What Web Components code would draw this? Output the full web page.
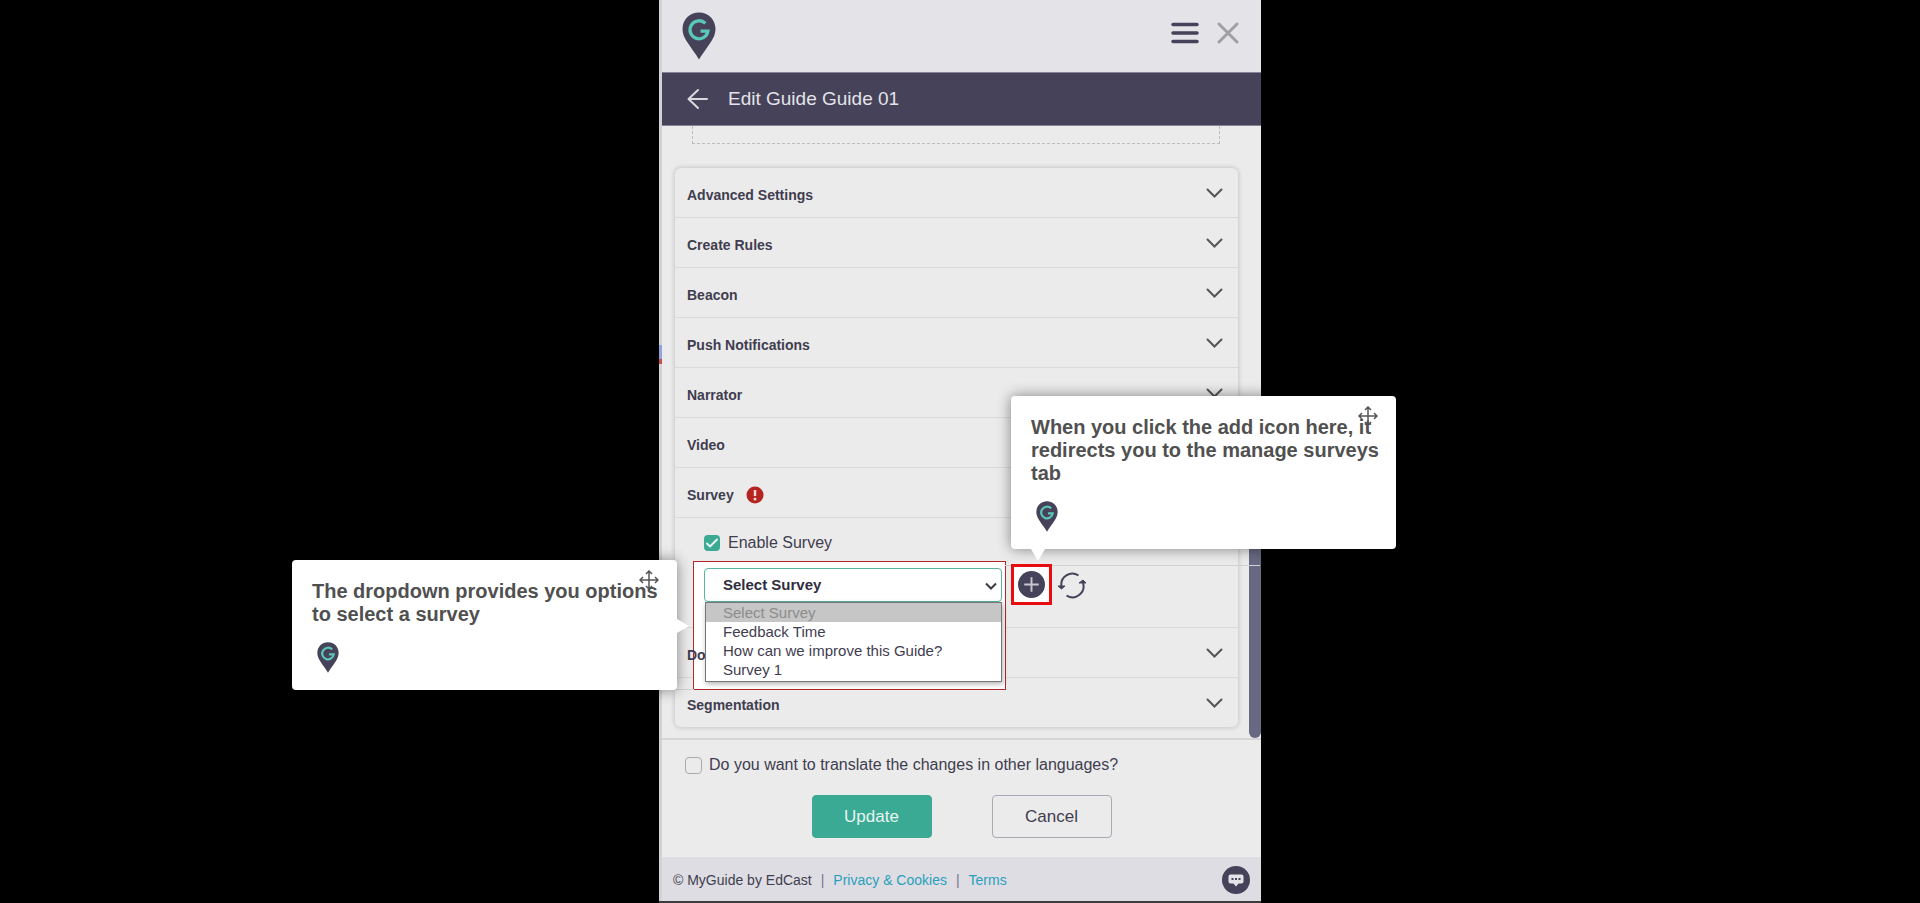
<!DOCTYPE html>
<html lang="en">
<head>
<meta charset="utf-8">
<title>Edit Guide</title>
<style>
    body {
        margin: 0;
        background: #000;
        font-family: "Liberation Sans", Arial, sans-serif;
        color: #3f3d4f;
    }
</style>
</head>
<body>
<guide-panel>
    <panel-header slot="header"></panel-header>
    <title-bar slot="header">Edit Guide Guide 01</title-bar>
    <settings-card>
        <accordion-row>Advanced Settings</accordion-row>
        <accordion-row>Create Rules</accordion-row>
        <accordion-row>Beacon</accordion-row>
        <accordion-row>Push Notifications</accordion-row>
        <accordion-row>Narrator</accordion-row>
        <accordion-row>Video</accordion-row>
        <accordion-row alert>Survey</accordion-row>
        <survey-settings>
            <guide-callout slot="select-tip" side="left">The dropdown provides you options to select a survey</guide-callout>
            <guide-callout slot="add-tip" side="top">When you click the add icon here, it redirects you to the manage surveys tab</guide-callout>
        </survey-settings>
        <accordion-row>Do</accordion-row>
        <accordion-row>Segmentation</accordion-row>
    </settings-card>
    <form-actions slot="footer"></form-actions>
    <panel-footer slot="footer"></panel-footer>
</guide-panel>

<script>
const reset = `
    :host, * {
        box-sizing: border-box;
    }

    button {
        padding: 0;
        border: 0;
        background: none;
        font: inherit;
        color: inherit;
        cursor: pointer;
    }

    svg {
        display: block;
    }
`;

class BaseElement extends HTMLElement {
    constructor() {
        super();
        this.shadowDOM = this.attachShadow({mode: "open"});
    }

    connectedCallback() {
        this.shadowDOM.innerHTML = `<style>${reset}</style>${this.template()}`;
    }
}

class GuidePanel extends BaseElement {
    template() {
        return `
        <style>
            :host {
                display: flex;
                flex-direction: column;
                width: 100%;
                max-width: 602px;
                min-height: 100vh;
                margin: 0 auto;
                padding-left: 3px;
                border-bottom: 2px solid #3c3c3c;
                background: linear-gradient(#d2d2d4 345px, #8fa5d8 345px, #8fa5d8 359px, #c05048 359px, #c05048 364px, #d2d2d4 364px);
            }
            .body {
                flex: 1;
                display: flex;
                background: #ebebeb;
                border-bottom: 2px solid #d6d6d6;
            }
            .content {
                flex: 1;
                padding: 0 11px 11px 13px;
            }
            .drop-area {
                height: 18px;
                margin: 0 18px 24px 17px;
                border: 1px dashed #bdbdbd;
                border-top: 0;
            }
            .scroll-thumb {
                align-self: flex-end;
                width: 12px;
                height: 300px;
                border-radius: 6px;
                background: #686882;
            }
        </style>
        <slot name="header"></slot>
        <div class="body">
            <div class="content">
                <div class="drop-area"></div>
                <slot></slot>
            </div>
            <div class="scroll-thumb"></div>
        </div>
        <slot name="footer"></slot>
        `;
    }
}

class GuidePin extends BaseElement {
    template() {
        return `
        <style>
            :host {
                display: block;
                width: 34px;
            }
        </style>
        <svg viewBox="0 0 34 48">
            <path d="M17 .5C7.500 .5.5 7.800.5 17c0 4.500 1.800 8.500 4 12C8.500 35.500 14 42 17 47.500 20 42 25.500 35.500 29.500 29c2.200-3.500 4-7.500 4-12C33.500 7.800 26.500.5 17 .5z" fill="#454259"/>
            <path d="M23.400 11.400A9 9 0 1 0 25.900 19.200H18.500" fill="none" stroke="#5ac8b8" stroke-width="3.300"/>
        </svg>
        `;
    }
}

class PanelHeader extends BaseElement {
    template() {
        return `
        <style>
            :host {
                display: flex;
                align-items: center;
                height: 72px;
                padding: 0 21px 0 20px;
                background: #e4e3e8;
            }
            nav {
                display: flex;
                gap: 16px;
                margin-left: auto;
                padding-bottom: 6px;
            }
        </style>
        <guide-pin></guide-pin>
        <nav>
            <button aria-label="Menu">
                <svg width="30" height="24" fill="none" stroke="#454259" stroke-width="3.500" stroke-linecap="round"><path d="M3 3.500h24M3 12h24M3 20.500h24"/></svg>
            </button>
            <button aria-label="Close">
                <svg width="24" height="24" fill="none" stroke="#a09fa4" stroke-width="3" stroke-linecap="round"><path d="M3 3l18 18M21 3L3 21"/></svg>
            </button>
        </nav>
        `;
    }
}

class TitleBar extends BaseElement {
    template() {
        return `
        <style>
            :host {
                display: flex;
                align-items: center;
                gap: 19px;
                height: 54px;
                padding-left: 25px;
                border-top: 1px solid #85839a;
                border-bottom: 1px solid #85839a;
                background: #454259;
                color: #e4e3e8;
            }
            h1 {
                margin: 0;
                font-size: 19px;
                line-height: 24px;
                font-weight: normal;
            }
        </style>
        <button aria-label="Back">
            <svg width="22" height="22" fill="none" stroke="#d9d8df" stroke-width="2" stroke-linecap="round" stroke-linejoin="round"><path d="M20 11H2M11 2l-9.500 9 9.500 9"/></svg>
        </button>
        <h1><slot></slot></h1>
        `;
    }
}

class SettingsCard extends BaseElement {
    template() {
        return `
        <style>
            :host {
                display: block;
                border-radius: 6px;
                box-shadow: 0 0 4px 1px #c8c8c8;
            }
        </style>
        <slot></slot>
        `;
    }
}

class AccordionRow extends BaseElement {
    template() {
        const alert = this.hasAttribute("alert")
            ? `<svg class="alert" width="18" height="18"><circle cx="9" cy="9" r="8.500" fill="#b5241f"/><path d="M9 4v6" stroke="#f3d9d8" stroke-width="2.500"/><circle cx="9" cy="13" r="1.500" fill="#f3d9d8"/></svg>`
            : "";
        return `
        <style>
            :host {
                display: block;
                border-bottom: 1px solid #dadada;
            }
            :host(:last-child) {
                border-bottom: 0;
            }
            button {
                display: flex;
                align-items: center;
                width: 100%;
                height: 49px;
                padding: 0 15px 0 12px;
                font-size: 14px;
                font-weight: bold;
            }
            span {
                position: relative;
                z-index: 2;
                padding-top: 4px;
            }
            .alert {
                margin: 4px 0 0 12px;
            }
            .chevron {
                margin-left: auto;
            }
        </style>
        <button>
            <span><slot></slot></span>
            ${alert}
            <svg class="chevron" width="17" height="10" fill="none" stroke="#555" stroke-width="2" stroke-linecap="round"><path d="M1.500 1.500l7 7 7-7"/></svg>
        </button>
        `;
    }
}

class SurveySettings extends BaseElement {
    template() {
        return `
        <style>
            :host {
                display: block;
                height: 110px;
                padding: 16px 29px;
                border-bottom: 1px solid #dadada;
            }
            .enable {
                display: flex;
                align-items: center;
                gap: 8px;
                height: 18px;
                margin-bottom: 15px;
                font-size: 16px;
            }
            .enable input {
                appearance: none;
                width: 16px;
                height: 16px;
                margin: 0;
                border-radius: 4px;
                background: #3aaa92;
            }
            .check {
                display: grid;
            }
            .check > * {
                grid-area: 1 / 1;
            }
            .controls {
                display: flex;
                align-items: center;
                gap: 15px;
            }
            .picker, .adder {
                position: relative;
            }
            .highlight {
                position: absolute;
                z-index: 1;
                inset: -7px -4px -88px -11px;
                border: 1px solid #b3262a;
                background: #fff;
            }
            .highlight::before, .highlight::after {
                content: "";
                position: absolute;
                height: 1px;
                background: #d0d0d2;
            }
            .highlight::before {
                top: 3px;
                left: 100%;
                width: 255px;
            }
            .highlight::after {
                top: 100%;
                right: 100%;
                width: 31px;
            }
            .select {
                position: relative;
                z-index: 3;
            }
            select {
                appearance: none;
                display: block;
                width: 298px;
                height: 34px;
                padding: 0 18px;
                border: 1px solid #57b5a2;
                border-radius: 4px;
                background: #fff;
                color: #302e40;
                font: bold 15px "Liberation Sans", Arial, sans-serif;
            }
            .arrow {
                position: absolute;
                top: 14px;
                right: 5px;
            }
            ul {
                position: absolute;
                top: 34px;
                left: 1px;
                right: 0;
                margin: 0;
                padding: 0 0 2px;
                border: 1px solid #777;
                background: #fff;
                box-shadow: 1px 2px 5px rgba(0, 0, 0, 0.3);
                list-style: none;
                font-size: 15px;
                line-height: 19px;
            }
            li {
                padding-left: 17px;
            }
            li[aria-selected] {
                background: #c6c6c6;
                color: #8c8c8c;
            }
            .add {
                display: block;
                position: relative;
                z-index: 2;
                margin: -3px -9px -3px -6px;
                padding: 4px;
                border: 3px solid #e60c10;
                background: #fff;
            }
            .tip {
                position: absolute;
                z-index: 5;
            }
            .select-tip {
                top: -8px;
                right: calc(100% + 27px);
            }
            .add-tip {
                bottom: calc(100% + 18px);
                left: -6px;
            }
        </style>
        <label class="enable">
            <div class="check">
                <input type="checkbox" checked>
                <svg width="16" height="16" fill="none" stroke="#e6f3ef" stroke-width="2" stroke-linecap="round" stroke-linejoin="round"><path d="M3 8.500l3 3 7-7"/></svg>
            </div>
            Enable Survey
        </label>
        <div class="controls">
            <div class="picker">
                <div class="highlight"></div>
                <div class="select">
                    <select aria-label="Survey">
                        <option>Select Survey</option>
                    </select>
                    <svg class="arrow" width="12" height="9" fill="none" stroke="#3a3a44" stroke-width="2"><path d="M1 1.500l5 5 5-5"/></svg>
                    <ul role="listbox">
                        <li role="option" aria-selected="true">Select Survey</li>
                        <li role="option">Feedback Time</li>
                        <li role="option">How can we improve this Guide?</li>
                        <li role="option">Survey 1</li>
                    </ul>
                </div>
                <div class="tip select-tip"><slot name="select-tip"></slot></div>
            </div>
            <div class="adder">
                <button class="add" aria-label="Add survey">
                    <svg width="27" height="27" viewBox="0 0 28 28"><circle cx="14" cy="14" r="14" fill="#454259"/><path d="M14 6.500v15M6.500 14h15" stroke="#c9c8d2" stroke-width="2"/></svg>
                </button>
                <div class="tip add-tip"><slot name="add-tip"></slot></div>
            </div>
            <button aria-label="Refresh surveys">
                <svg width="28" height="28" fill="none" stroke="#454259" stroke-width="2"><path d="M3.500 15.500A11 11 0 0 1 20.500 4.500M25 12a11 11 0 0 1-16.500 12.500"/><path d="M0 15h7l-3.500 3zM21 12h7l-3-3z" fill="#454259" stroke-width="1"/></svg>
            </button>
        </div>
        `;
    }
}

class GuideCallout extends BaseElement {
    template() {
        return `
        <style>
            :host {
                display: block;
                position: relative;
                width: 385px;
                padding: 20px 16px 17px 20px;
                border-radius: 4px;
                background: #fff;
                box-shadow: 0 0 14px rgba(0, 0, 0, 0.45);
                color: #505050;
            }
            p {
                margin: 0 0 16px;
                font-size: 20px;
                line-height: 23px;
                font-weight: bold;
            }
            guide-pin {
                width: 22px;
                margin-left: 5px;
            }
            .move {
                position: absolute;
                top: 10px;
                right: 18px;
            }
            .tail {
                position: absolute;
                border: 7px solid transparent;
            }
            :host([side="left"]) .tail {
                left: 100%;
                top: 59px;
                border-left: 12px solid #fff;
                border-right: 0;
            }
            :host([side="top"]) .tail {
                top: 100%;
                left: 20px;
                border-top: 12px solid #fff;
                border-bottom: 0;
            }
        </style>
        <p><slot></slot></p>
        <guide-pin></guide-pin>
        <svg class="move" width="20" height="20" fill="none" stroke="#555" stroke-width="1.500"><path d="M10 1v18M1 10h18M7 4l3-3 3 3M7 16l3 3 3-3M4 7l-3 3 3 3M16 7l3 3-3 3"/></svg>
        <div class="tail"></div>
        `;
    }
}

class FormActions extends BaseElement {
    template() {
        return `
        <style>
            :host {
                display: block;
                padding: 16px 23px 19px;
                background: #ebebeb;
            }
            label {
                display: flex;
                align-items: center;
                gap: 7px;
                height: 18px;
                margin-bottom: 21px;
                font-size: 16px;
            }
            input {
                appearance: none;
                width: 17px;
                height: 17px;
                margin: 0;
                border: 1px solid #aaa9b0;
                border-radius: 4px;
            }
            .buttons {
                display: flex;
                justify-content: center;
                gap: 60px;
            }
            .buttons button {
                width: 120px;
                height: 43px;
                border: 1px solid #a9a8b3;
                border-radius: 4px;
                font-size: 17px;
            }
            .buttons .update {
                border-color: #3aaa94;
                background: #3aaa94;
                color: #e8f5f2;
            }
        </style>
        <label><input type="checkbox"> Do you want to translate the changes in other languages?</label>
        <div class="buttons">
            <button class="update">Update</button>
            <button>Cancel</button>
        </div>
        `;
    }
}

class PanelFooter extends BaseElement {
    template() {
        return `
        <style>
            :host {
                display: flex;
                align-items: center;
                gap: 9px;
                height: 44px;
                padding: 2px 11px 0;
                background: #dedde3;
                font-size: 14px;
            }
            a {
                color: #2a9fbc;
                text-decoration: none;
            }
            i {
                font-style: normal;
                color: #77758a;
            }
            button {
                margin-left: auto;
            }
        </style>
        <span>© MyGuide by EdCast</span><i>|</i>
        <a href="#privacy">Privacy &amp; Cookies</a><i>|</i>
        <a href="#terms">Terms</a>
        <button aria-label="Chat">
            <svg width="28" height="28"><circle cx="14" cy="14" r="14" fill="#454259"/><path d="M8.500 8.500h11a2 2 0 0 1 2 2v5a2 2 0 0 1-2 2h-3l-2.500 3-2.500-3h-3a2 2 0 0 1-2-2v-5a2 2 0 0 1 2-2z" fill="#e4e3e8"/><path d="M9.500 13h2M13 13h2M16.500 13h2" stroke="#454259" stroke-width="2"/></svg>
        </button>
        `;
    }
}

customElements.define("guide-panel", GuidePanel);
customElements.define("guide-pin", GuidePin);
customElements.define("panel-header", PanelHeader);
customElements.define("title-bar", TitleBar);
customElements.define("settings-card", SettingsCard);
customElements.define("accordion-row", AccordionRow);
customElements.define("survey-settings", SurveySettings);
customElements.define("guide-callout", GuideCallout);
customElements.define("form-actions", FormActions);
customElements.define("panel-footer", PanelFooter);
</script>
</body>
</html>
